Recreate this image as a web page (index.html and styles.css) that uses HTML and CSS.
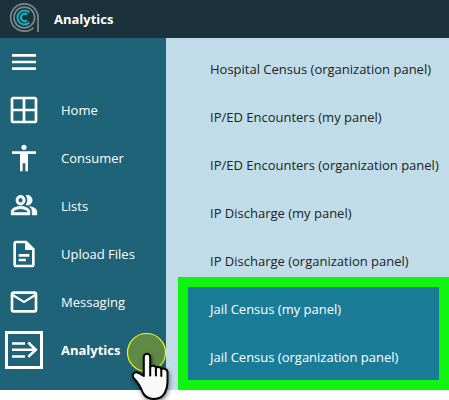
FILE: index.html
```html
<!DOCTYPE html>
<html lang="en">
<head>
  <meta charset="UTF-8">
  <title>Analytics</title>
  <link rel="stylesheet" href="styles.css">
</head>
<body>
<header class="topbar">
  <svg class="logo" viewBox="0 0 32 32">
    <g fill="none">
      <path class="logo-grey" d="M29 29V14.500A13.700 13.700 0 1 0 15.300 28.200C19 28.200 22 27 24.500 24.800"/>
      <path class="logo-grey" d="M25.600 14.500A10.300 10.300 0 1 0 15.300 24.800C20.500 24.800 25.600 21 25.600 14.500"/>
      <path class="logo-teal" d="M20.300 9.400A7 7 0 1 0 20.300 19.600"/>
      <path class="logo-teal" d="M18 11.600A3.700 3.700 0 1 0 18 17.400"/>
    </g>
  </svg>
  <span class="title">Analytics</span>
</header>

<div class="main">
  <nav class="sidebar">
    <a class="item" href="#">
      <svg class="icon" viewBox="0 0 24 24"><path d="M3 18h18v-2H3v2zm0-5h18v-2H3v2zm0-7v2h18V6H3z"/></svg>
    </a>
    <a class="item" href="#">
      <svg class="icon" viewBox="0 0 24 24"><path d="M20 2H4c-1.1 0-2 .9-2 2v16c0 1.1.9 2 2 2h16c1.1 0 2-.9 2-2V4c0-1.1-.9-2-2-2zm0 9h-7V4h7v7zm-9-7v7H4V4h7zm-7 9h7v7H4v-7zm9 7v-7h7v7h-7z"/></svg>
      <span>Home</span>
    </a>
    <a class="item" href="#">
      <svg class="icon" viewBox="0 0 24 24"><path d="M12 2c1.1 0 2 .9 2 2s-.9 2-2 2-2-.9-2-2 .9-2 2-2zm9 7h-6v13h-2v-6h-2v6H9V9H3V7h18v2z"/></svg>
      <span>Consumer</span>
    </a>
    <a class="item" href="#">
      <svg class="icon people" viewBox="0 0 24 24"><path transform="translate(1.6 .3) scale(.87 .92)" d="M16.67 13.13C18.04 14.06 19 15.32 19 17v3h4v-3c0-2.18-3.57-3.47-6.33-3.87zM15 12c2.21 0 4-1.79 4-4s-1.79-4-4-4c-.47 0-.91.1-1.33.24C14.5 5.27 15 6.58 15 8s-.5 2.73-1.33 3.76c.42.14.86.24 1.33.24zM9 12c2.21 0 4-1.79 4-4s-1.79-4-4-4-4 1.79-4 4 1.79 4 4 4zm0-6c1.1 0 2 .9 2 2s-.9 2-2 2-2-.9-2-2 .9-2 2-2zM9 13c-2.67 0-8 1.34-8 4v3h16v-3c0-2.66-5.33-4-8-4zm6 5H3v-.99C3.2 16.29 6.3 15 9 15s5.8 1.29 6 2v1z"/></svg>
      <span>Lists</span>
    </a>
    <a class="item" href="#">
      <svg class="icon" viewBox="0 0 24 24"><path d="M8 15.5h5.5v2H8zM8 12h8v2H8zM14 2H6c-1.1 0-2 .9-2 2v16c0 1.1.9 2 2 2h12c1.1 0 2-.9 2-2V8l-6-6zm4 18H6V4h7v5h5v11z"/><path d="M13 3l6 6h-6z"/></svg>
      <span>Upload Files</span>
    </a>
    <a class="item" href="#">
      <svg class="icon" viewBox="0 0 24 24"><path d="M22 6c0-1.100-.9-2-2-2H4c-1.100 0-2 .9-2 2v12c0 1.100.9 2 2 2h16c1.100 0 2-.9 2-2V6zm-2 0l-8 5-8-5h16zm0 12H4V8l8 5 8-5v10z"/></svg>
      <span>Messaging</span>
    </a>
    <a class="item active" href="#">
      <svg class="icon" viewBox="0 0 32 32"><path class="line" d="M4 9.500h13M4 15.700h23M4 22.500h13M20.300 8.500l7.500 7.200-7.500 7.200"/></svg>
      <span>Analytics</span>
    </a>
  </nav>

  <section class="submenu">
    <ul class="list">
      <li>Hospital Census (organization panel)</li>
      <li>IP/ED Encounters (my panel)</li>
      <li>IP/ED Encounters (organization panel)</li>
      <li>IP Discharge (my panel)</li>
      <li>IP Discharge (organization panel)</li>
    </ul>
    <ul class="list highlight">
      <li>Jail Census (my panel)</li>
      <li>Jail Census (organization panel)</li>
    </ul>
  </section>
</div>

<svg class="pointer" viewBox="0 0 60 75">
  <circle class="ring" cx="21.500" cy="27.500" r="19"/>
  <path class="hand" d="M18.800 51V32a3.200 3.200 0 0 1 6.400 0V42c1.500-2 5-1.500 5.700.6 1.500-1.200 4.500-.7 5.400 1.200 2.500-.9 6 .3 6.200 3.200V57c0 4-.8 7-2.500 10.500-2 4-5.500 6.500-11 6.500-6 0-9.500-2.500-11.500-7C15.500 62 13 57.500 9 53.500c-3-3.500.5-8 4.500-5.500z"/>
  <path class="finger" d="M25.200 42v8.500M30.900 43v7.500M36.300 44.500v6.500"/>
</svg>
</body>
</html>
```

FILE: styles.css
```css
* {
  box-sizing: border-box;
}

body {
  margin: 0;
  background: #fff;
  font-family: "Open Sans", "Noto Sans", sans-serif;
  font-size: 13px;
  line-height: 18px;
}

.topbar {
  display: flex;
  align-items: center;
  height: 38px;
  padding-left: 9px;
  background: #1b313b;
  color: #fff;
}

.logo {
  width: 32px;
  height: 32px;
  margin-right: 13px;
}

.logo-grey {
  stroke: #7c868b;
  stroke-width: 1.7;
}

.logo-teal {
  stroke: #12b5c4;
  stroke-width: 2;
}

.title {
  font-weight: bold;
}

.main {
  display: flex;
  height: 352px;
}

.sidebar {
  width: 166px;
  background: #1e6378;
}

.item {
  display: flex;
  align-items: center;
  height: 48px;
  padding-left: 8px;
  color: #fff;
  text-decoration: none;
}

.icon {
  width: 32px;
  height: 32px;
  margin-right: 21px;
  fill: #fff;
}

.people {
  stroke: #fff;
  stroke-width: .5;
}

.active {
  padding-left: 5px;
  font-weight: bold;
}

.active .icon {
  width: 38px;
  height: 38px;
  margin-right: 18px;
  border: 3px solid #fff;
}

.line {
  fill: none;
  stroke: #fff;
  stroke-width: 2.6;
}

.submenu {
  flex: 1;
  padding: 22px 0 0 12px;
  background: #c0dce8;
  color: #222;
}

.list {
  display: flex;
  flex-direction: column;
  gap: 30px;
  margin: 0;
  padding: 0 0 0 32px;
  list-style: none;
  white-space: nowrap;
}

.highlight {
  height: 113px;
  margin-top: 7px;
  padding: 13px 0 0 22px;
  border: 10px solid #10f510;
  background: #1b7c98;
  color: #fff;
}

/* click marker and hand cursor over the menu */
.pointer {
  position: absolute;
  left: 125px;
  top: 325px;
  width: 60px;
  height: 75px;
}

.ring {
  fill: #5f8a45;
  stroke: #f5f514;
  stroke-width: 1.2;
}

.hand {
  fill: #f8f8f8;
  stroke: #000;
  stroke-width: 2;
  stroke-linejoin: round;
  filter: drop-shadow(1px 2px 2px rgba(0, 0, 0, .5));
}

.finger {
  fill: none;
  stroke: #000;
  stroke-width: 2;
  stroke-linecap: round;
}
```
